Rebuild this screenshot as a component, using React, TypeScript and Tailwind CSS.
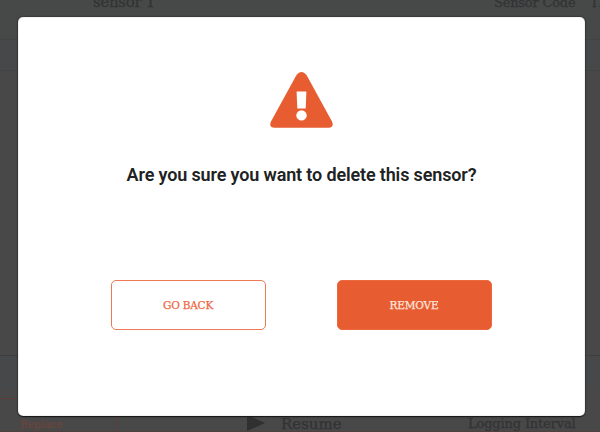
import React from "react";

const slab = "font-['DejaVu_Serif',serif]";

function SensorPage() {
  return (
    <div className={`flex h-full flex-col bg-[#484848] text-[#323334] [-webkit-text-stroke:0.25px_currentColor] ${slab}`}>
      <header className="flex h-[39px] shrink-0 bg-[#474948] text-[13px] leading-none">
        <span className="mt-[-5px] ml-[93px] w-[401px] shrink-0 text-[15px] tracking-[-0.3px]">sensor 1</span>
        <span className="mt-[-4px] w-[97px] shrink-0 whitespace-nowrap tracking-[-0.2px]">Sensor Code</span>
        <span className="mt-[-4px] ml-[-1px] shrink-0">Th</span>
      </header>
      <div className="h-8 shrink-0 border-y border-[#414443] bg-[#46484a]" />
      <main className="flex-1" />
      <div className="h-[34px] shrink-0 border-t border-[#3e3e3e] bg-[#46484a]" />
      <div className="h-[9px] shrink-0" />
      <footer className="flex h-[34px] shrink-0 border-b border-[#4e403d]">
        <div className="w-[118px] border-t border-r border-[#5c3d37] pt-[19px] pl-5 text-[10.5px] leading-3 text-[#6b453d]">
          Replace
        </div>
        <div className="flex w-[350px] pt-[17px]">
          <svg className="ml-[129px] h-[16px] w-[18px]" viewBox="0 0 18 16">
            <path d="M0 0 18 8 0 16Z" fill="#303030" />
          </svg>
          <span className="ml-[16px] text-[15px] leading-[18px]">Resume</span>
        </div>
        <span className="whitespace-nowrap pt-[17px] text-[13px] leading-[18px] tracking-[-0.15px]">Logging Interval</span>
      </footer>
    </div>
  );
}

function WarningIcon() {
  return (
    <svg className="h-[57px] w-[64px]" viewBox="0 0 64 57" aria-hidden="true">
      <path
        d="M27.2 3.2Q31.5-1.2 35.8 3.2Q36.5 4 37.2 5.2L62 50.5Q64.5 56.6 58.5 56.8H4.8Q-1.5 56.6 1 50.5L25.8 5.2Q26.5 4 27.2 3.2Z"
        fill="#e85c31"
      />
      <path d="M26.6 20.4H36.4L35.7 37.4H27.3Z" fill="#fff" />
      <circle cx="31.5" cy="44.4" r="5.2" fill="#fff" />
    </svg>
  );
}

export default function App() {
  return (
    <div className="relative h-[432px] w-[600px] overflow-hidden">
      <SensorPage />
      <div className="absolute inset-0 px-[18px] pt-[17px]">
        <section
          role="dialog"
          className="flex h-[399px] w-[567px] flex-col items-center rounded-[5px] bg-white pt-[54px] shadow-[0_0_2px_#181818,0_1px_1px_#181818,inset_0_0_1px_#777]"
        >
          <WarningIcon />
          <h1 className="mt-[35px] whitespace-nowrap font-[Roboto,sans-serif] text-[18px] leading-6 font-semibold tracking-[-0.14px] text-[#202222]">
            Are you sure you want to delete this sensor?
          </h1>
          <div className={`mt-[93px] mr-px flex gap-[71px] text-[10.5px] [-webkit-text-stroke:0.25px_currentColor] ${slab}`}>
            <button className="h-[50px] w-[155px] rounded-[5px] border border-[#ee7955] pt-0.5 text-[#ec6742] tracking-[-0.2px]">
              GO BACK
            </button>
            <button className="h-[50px] w-[155px] rounded-[5px] border border-[#ec683f] bg-[#e85c31] pt-0.5 text-[#ffe5dd] tracking-[-0.2px]">
              REMOVE
            </button>
          </div>
        </section>
      </div>
    </div>
  );
}
